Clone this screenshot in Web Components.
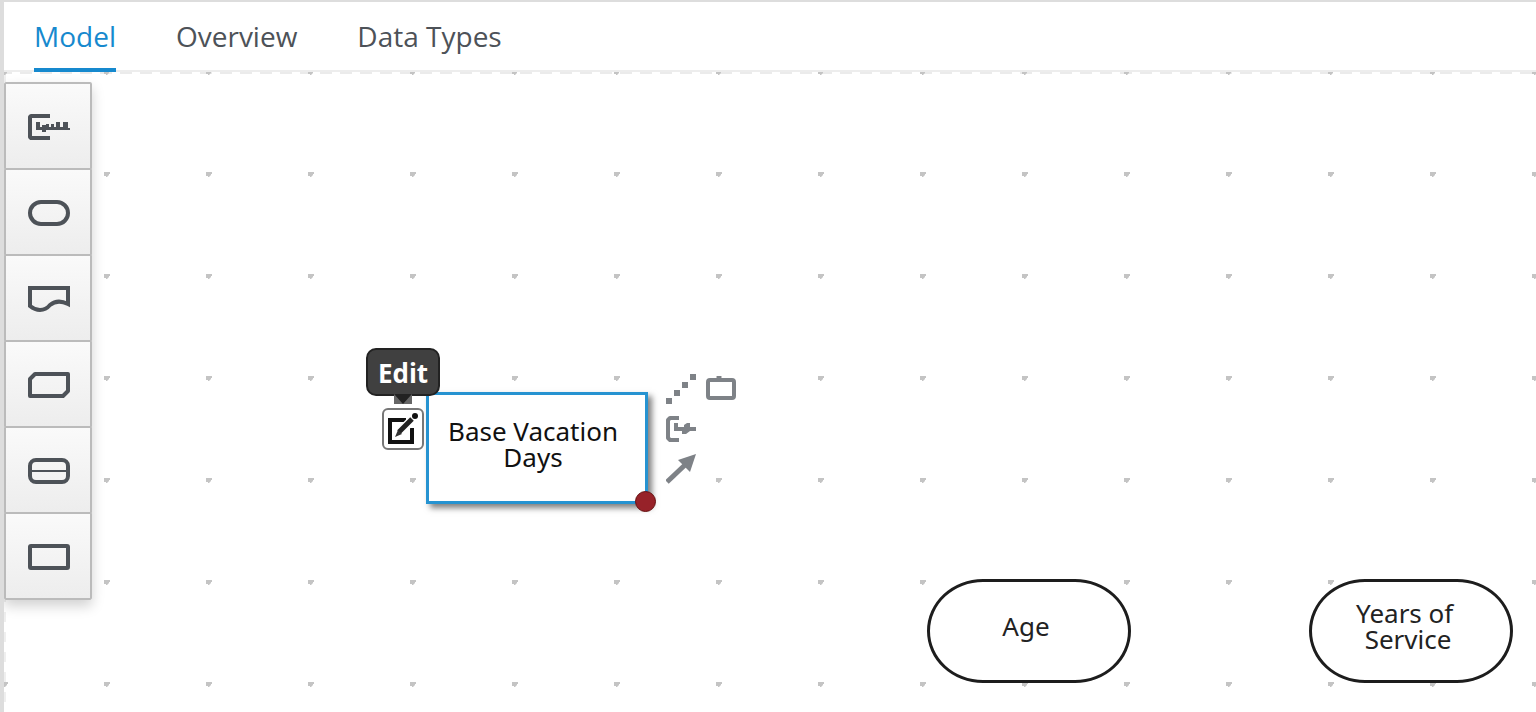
<!DOCTYPE html>
<html lang="en">
<head>
<meta charset="utf-8">
<title>DMN Editor</title>
<style>
  body { margin: 0; background: #fff; font-family: "Open Sans", "Noto Sans", sans-serif; }
</style>
</head>
<body>
<dmn-editor>
  <dmn-tabs slot="tabs">
    <dmn-tab active>Model</dmn-tab>
    <dmn-tab>Overview</dmn-tab>
    <dmn-tab>Data Types</dmn-tab>
  </dmn-tabs>
  <dmn-palette></dmn-palette>
  <dmn-canvas>
    <dmn-decision style="left:422px;top:320px">Base Vacation<br>Days</dmn-decision>
    <dmn-edit style="left:362px;top:276px"></dmn-edit>
    <dmn-toolbox style="left:662px;top:302px"></dmn-toolbox>
    <dmn-input style="left:923px;top:507px">Age</dmn-input>
    <dmn-input style="left:1305px;top:507px">Years of&nbsp;<br>Service</dmn-input>
  </dmn-canvas>
</dmn-editor>

<script>
const define = (name, html) => {
  const template = document.createElement('template');
  template.innerHTML = html;
  customElements.define(name, class extends HTMLElement {
    constructor() {
      super();
      this.attachShadow({ mode: 'open' }).append(template.content.cloneNode(true));
    }
  });
};

define('dmn-editor', `
<style>
  :host { display: flex; flex-direction: column; min-height: 100vh; box-sizing: border-box;
          border-top: 2px solid #ddd; border-left: 4px solid #ddd; overflow: hidden; }
  main { flex: 1; display: grid; }
  ::slotted(*) { grid-area: 1 / 1; }
</style>
<slot name="tabs"></slot>
<main><slot></slot></main>`);

define('dmn-tabs', `
<style>
  :host { display: block; border-bottom: 2px solid #ededed; }
  nav { display: flex; gap: 60px; height: 68px; padding-left: 30px; }
</style>
<nav role="tablist" aria-label="Editor views"><slot></slot></nav>`);

define('dmn-tab', `
<style>
  :host { display: flex; height: 70px; }
  button { all: unset; box-sizing: border-box; height: 70px; cursor: pointer;
           font-size: 28px; line-height: 68px; color: #4d5258; border-bottom: 4px solid transparent; white-space: nowrap; }
  :host([active]) button { color: #1689ce; border-color: #1689ce; }
</style>
<button type="button" role="tab"><slot></slot></button>`);

define('dmn-palette', `
<style>
  :host { display: flex; flex-direction: column; place-self: start; z-index: 1; margin-top: 10px;
          box-shadow: 0 6px 12px rgba(0,0,0,.18); }
  button { display: flex; align-items: center; justify-content: center; box-sizing: border-box;
           width: 88px; height: 88px; padding: 0; border: 2px solid #bbb; border-radius: 2px;
           background: linear-gradient(#fafafa, #ededed); }
  button + button { margin-top: -2px; }
  svg { width: 44px; height: 28px; fill: none; stroke: #4d5258; stroke-width: 4; }
</style>
<button type="button" aria-label="Text annotation"><svg viewBox="0 0 44 28"><path stroke-linejoin="round" d="M24 4H5L4 5V25L5 26H24"/><path fill="#4d5258" stroke="none" d="M10 10H14V15H16V13H20V12H23V15H25V12H28V15H30V10H34V15H37V10H42V16H44V18H28V18H20V20H16V18H10Z"/></svg></button>
<button type="button" aria-label="Input data"><svg viewBox="0 0 44 28"><rect x="4" y="4" width="38" height="22" rx="11"/></svg></button>
<button type="button" aria-label="Knowledge source"><svg viewBox="0 0 44 28"><path d="M4 22V4H42V20C36 17 30 16 24 21C18 28 10 27 4 22Z"/></svg></button>
<button type="button" aria-label="Business knowledge model"><svg viewBox="0 0 44 28"><path stroke-linejoin="round" d="M9 4H42V21L37 26H4V9Z"/></svg></button>
<button type="button" aria-label="Decision service"><svg viewBox="0 0 44 28"><rect x="4" y="4" width="38" height="22" rx="6"/><path stroke-width="2" d="M4 15H42"/></svg></button>
<button type="button" aria-label="Decision"><svg viewBox="0 0 44 28"><rect x="4" y="4" width="38" height="22" rx="1"/></svg></button>`);

define('dmn-canvas', `
<style>
  :host { display: block; position: relative; min-width: 0; overflow: hidden; }
  .grid { position: absolute; inset: 0; width: 100%; height: 100%; }
</style>
<svg class="grid" aria-hidden="true">
  <defs>
    <pattern id="dots" width="102" height="102" patternUnits="userSpaceOnUse">
      <path fill="#c4c4c4" d="M0 0H3V1L1 3H0Z M100 0H102V2H100Z M0 100H4V102H0Z M100 100H102V102H100Z"/>
    </pattern>
  </defs>
  <path d="M0 1H4000" stroke="#ebebeb" stroke-width="2" stroke-dasharray="12 8" stroke-dashoffset="4"/>
  <path d="M1 0V4000" stroke="#efefef" stroke-width="2" stroke-dasharray="10 10"/>
  <rect width="100%" height="100%" fill="url(#dots)"/>
</svg>
<slot></slot>`);

define('dmn-decision', `
<style>
  :host { position: absolute; display: flex; align-items: center; justify-content: center; box-sizing: border-box;
          width: 222px; height: 112px; padding: 0 8px 8px 0; border: 3px solid #2693d1; background: #fff;
          box-shadow: 4px 4px 6px rgba(0,0,0,.5); font-family: "Noto Sans", sans-serif; font-size: 26px; line-height: 26px; text-align: center; color: #111; }
  div { white-space: nowrap; }
  i { position: absolute; right: -11px; bottom: -11px; width: 19px; height: 19px; border: 1px solid #611; border-radius: 50%; background: #972229; }
</style>
<div><slot></slot></div><i></i>`);

define('dmn-input', `
<style>
  :host { position: absolute; display: flex; align-items: center; justify-content: center; box-sizing: border-box;
          width: 204px; height: 104px; padding: 0 6px 10px 0; border: 3px solid #1d1d1d; border-radius: 56px / 52px;
          background: #fff; font-family: "Noto Sans", sans-serif; font-size: 26px; line-height: 26px; text-align: center; color: #222; }
  div { white-space: nowrap; }
</style>
<div><slot></slot></div>`);

define('dmn-edit', `
<style>
  :host { position: absolute; display: flex; flex-direction: column; align-items: center; gap: 12px; width: 74px; }
  [role=tooltip] { position: relative; box-sizing: border-box; width: 74px; height: 48px; border: 2px solid #222; border-radius: 10px;
       background: #404040; color: #fff; font-size: 26px; font-weight: 700; line-height: 46px; text-align: center; }
  .tip { position: absolute; left: 26px; top: 44px; width: 18px; height: 10px; }
  button { display: flex; box-sizing: border-box; width: 42px; height: 42px; padding: 0; border: 2px solid #777; border-radius: 6px; background: #fff; }
  .pen { width: 38px; height: 38px; }
</style>
<div role="tooltip" id="tip">Edit<svg class="tip" viewBox="0 0 18 10"><path fill="#666" d="M0 0H18V10H0Z"/><path fill="#222" d="M0 0H18L9 10Z"/></svg></div>
<button type="button" aria-labelledby="tip"><svg class="pen" viewBox="0 0 38 38"><path fill="none" stroke="#111" stroke-width="4" d="M22 10H6V32H28V18"/><path stroke="#fff" stroke-width="9" d="M13 25L31 7"/><path stroke="#222" stroke-width="5" d="M15 22L28 9"/><path fill="#333" d="M14 20L18 24L11 27Z"/><circle cx="31" cy="6" r="3" fill="#111"/></svg></button>`);

define('dmn-toolbox', `
<style>
  :host { position: absolute; display: grid; grid-template-columns: 30px 30px; gap: 10px; }
  button { display: block; width: 30px; height: 30px; padding: 0; border: 0; background: none; }
  svg { display: block; width: 30px; height: 30px; fill: none; stroke: #7e8287; stroke-width: 4; }
  .row { grid-column: 1; }
</style>
<button type="button" aria-label="Create association"><svg viewBox="0 0 30 30"><path fill="#7e8287" stroke="none" d="M0 24H6V30H0ZM8 16H14V22H8ZM16 8H22V14H16ZM24 0H30V6H24Z"/></svg></button>
<button type="button" aria-label="Create decision"><svg viewBox="0 0 30 30"><rect x="2" y="6" width="26" height="18" rx="2"/><path stroke-width="2" d="M11 3H15"/></svg></button>
<button type="button" class="row" aria-label="Create text annotation"><svg viewBox="0 0 30 30"><path stroke-linejoin="round" d="M13 4H4L2 6V24L4 26H13"/><path fill="#7e8287" stroke="none" d="M8 9H12V13H18V11L21 9H24V13H30V17H24L20 20H16V17H8Z"/></svg></button>
<button type="button" class="row" aria-label="Create information requirement"><svg viewBox="0 0 30 30"><path stroke-width="5" d="M1 28L20 10"/><path fill="#7e8287" stroke="none" d="M30 0L12 6L24 18Z"/></svg></button>`);

customElements.whenDefined('dmn-tab').then(() => {
  document.querySelectorAll('dmn-tab').forEach(tab =>
    tab.shadowRoot.querySelector('button').setAttribute('aria-selected', tab.hasAttribute('active')));
});
</script>
</body>
</html>
